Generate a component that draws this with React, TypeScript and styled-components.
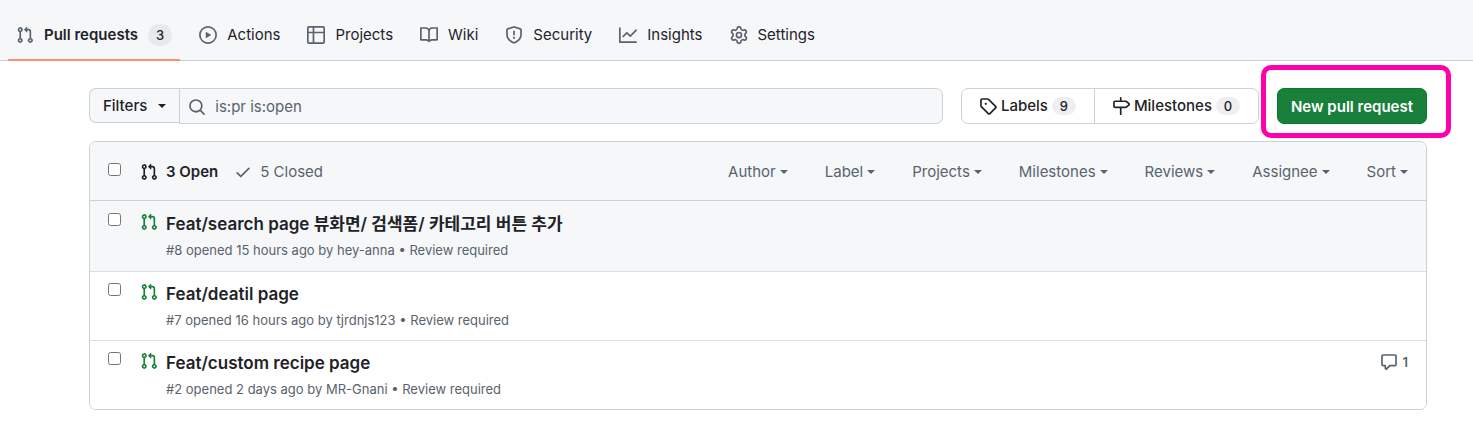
import React from "react";
import styled, { createGlobalStyle } from "styled-components";

const color = {
  text: "#1f2328",
  muted: "#59636e",
  border: "#c9d1d9",
  rowBorder: "#d8dee4",
  subtle: "#f5f7f9",
  green: "#18803a",
  accent: "#fd8c73",
  highlight: "#ff00aa",
};

const GlobalStyle = createGlobalStyle`
  *, *::before, *::after { box-sizing: border-box; }
  body {
    margin: 0;
    background: #ffffff;
    color: ${color.text};
    font-family: Inter, "Noto Sans CJK KR", "Liberation Sans", sans-serif;
    font-size: 15px;
    line-height: 24px;
  }
  button, input { font: inherit; color: inherit; }
  a { color: inherit; text-decoration: none; }
`;

const paths = {
  pull: "M1.5 3.25a2.25 2.25 0 1 1 3 2.122v5.256a2.251 2.251 0 1 1-1.5 0V5.372A2.25 2.25 0 0 1 1.5 3.25Zm5.677-.177L9.573.677A.25.25 0 0 1 10 .854V2.5h1A2.5 2.5 0 0 1 13.5 5v5.628a2.251 2.251 0 1 1-1.5 0V5a1 1 0 0 0-1-1h-1v1.646a.25.25 0 0 1-.427.177L7.177 3.427a.25.25 0 0 1 0-.354ZM3.75 2.5a.75.75 0 1 0 0 1.5.75.75 0 0 0 0-1.5Zm0 9.5a.75.75 0 1 0 0 1.5.75.75 0 0 0 0-1.5Zm8.25.75a.75.75 0 1 0 1.5 0 .75.75 0 0 0-1.5 0Z",
  play: "M8 0a8 8 0 1 1 0 16A8 8 0 0 1 8 0ZM1.5 8a6.5 6.5 0 1 0 13 0 6.5 6.5 0 0 0-13 0Zm4.879-2.773 4.264 2.559a.25.25 0 0 1 0 .428l-4.264 2.559A.25.25 0 0 1 6 10.559V5.442a.25.25 0 0 1 .379-.215Z",
  table: "M0 1.75C0 .784.784 0 1.75 0h12.5C15.216 0 16 .784 16 1.75v12.5A1.75 1.75 0 0 1 14.25 16H1.75A1.75 1.75 0 0 1 0 14.25ZM6.5 6.5v8h7.75a.25.25 0 0 0 .25-.25V6.5Zm8-1.5V1.75a.25.25 0 0 0-.25-.25H6.5V5Zm-13 1.5v7.75c0 .138.112.25.25.25H5v-8ZM5 5V1.5H1.75a.25.25 0 0 0-.25.25V5Z",
  book: "M0 1.75A.75.75 0 0 1 .75 1h4.253c1.227 0 2.317.59 3 1.501A3.743 3.743 0 0 1 11.006 1h4.245a.75.75 0 0 1 .75.75v10.5a.75.75 0 0 1-.75.75h-4.507a2.25 2.25 0 0 0-1.591.659l-.622.621a.75.75 0 0 1-1.06 0l-.622-.621A2.25 2.25 0 0 0 5.258 13H.75a.75.75 0 0 1-.75-.75Zm7.251 10.324.004-5.073-.002-2.253A2.25 2.25 0 0 0 5.003 2.5H1.5v9h3.757a3.75 3.75 0 0 1 1.994.574ZM8.755 4.75l-.004 7.322a3.752 3.752 0 0 1 1.992-.572H14.5v-9h-3.495a2.25 2.25 0 0 0-2.25 2.25Z",
  shield: "M7.467.133a1.748 1.748 0 0 1 1.066 0l5.25 1.68A1.75 1.75 0 0 1 15 3.48V7c0 1.566-.32 3.182-1.303 4.682-.983 1.498-2.585 2.813-5.032 3.855a1.697 1.697 0 0 1-1.33 0c-2.447-1.042-4.049-2.357-5.032-3.855C1.32 10.182 1 8.566 1 7V3.48a1.75 1.75 0 0 1 1.217-1.667Zm.61 1.429a.25.25 0 0 0-.153 0l-5.25 1.68a.25.25 0 0 0-.174.238V7c0 1.358.275 2.666 1.057 3.86.784 1.194 2.121 2.34 4.366 3.297a.196.196 0 0 0 .154 0c2.245-.956 3.582-2.104 4.366-3.298C13.225 9.666 13.5 8.36 13.5 7V3.48a.251.251 0 0 0-.174-.237l-5.25-1.68ZM8.75 4.75v3a.75.75 0 0 1-1.5 0v-3a.75.75 0 0 1 1.5 0ZM9 10.5a1 1 0 1 1-2 0 1 1 0 0 1 2 0Z",
  graph: "M1.5 1.75V13.5h13.75a.75.75 0 0 1 0 1.5H.75a.75.75 0 0 1-.75-.75V1.75a.75.75 0 0 1 1.5 0Zm14.28 2.53-5.25 5.25a.75.75 0 0 1-1.06 0L7 7.06 4.28 9.78a.751.751 0 0 1-1.042-.018.751.751 0 0 1-.018-1.042l3.25-3.25a.75.75 0 0 1 1.06 0L10 7.94l4.72-4.72a.751.751 0 0 1 1.042.018.751.751 0 0 1 .018 1.042Z",
  gear: "M8 0a8.2 8.2 0 0 1 .701.031C9.444.095 9.99.645 10.16 1.29l.288 1.107c.018.066.079.158.212.224.231.114.454.243.668.386.123.082.233.09.299.071l1.103-.303c.644-.176 1.392.021 1.82.63.27.385.506.792.704 1.218.315.675.111 1.422-.364 1.891l-.814.806c-.049.048-.098.147-.088.294.016.257.016.515 0 .772-.01.147.038.246.088.294l.814.806c.475.469.679 1.216.364 1.891a7.977 7.977 0 0 1-.704 1.217c-.428.61-1.176.807-1.82.63l-1.102-.302c-.067-.019-.177-.011-.3.071a5.909 5.909 0 0 1-.668.386c-.133.066-.194.158-.211.224l-.29 1.106c-.168.646-.715 1.196-1.458 1.26a8.006 8.006 0 0 1-1.402 0c-.743-.064-1.289-.614-1.458-1.26l-.289-1.106c-.018-.066-.079-.158-.212-.224a5.738 5.738 0 0 1-.668-.386c-.123-.082-.233-.09-.299-.071l-1.103.303c-.644.176-1.392-.021-1.82-.63a8.12 8.12 0 0 1-.704-1.218c-.315-.675-.111-1.422.363-1.891l.815-.806c.05-.048.098-.147.088-.294a6.214 6.214 0 0 1 0-.772c.01-.147-.038-.246-.088-.294l-.815-.806C.635 6.045.431 5.298.746 4.623a7.92 7.92 0 0 1 .704-1.217c.428-.61 1.176-.807 1.82-.63l1.102.302c.067.019.177.011.3-.071.214-.143.437-.272.668-.386.133-.066.194-.158.211-.224l.29-1.106C6.009.645 6.556.095 7.299.03 7.53.01 7.764 0 8 0Zm-.571 1.525c-.036.003-.108.036-.137.146l-.289 1.105c-.147.561-.549.967-.998 1.189-.173.086-.34.183-.5.29-.417.278-.97.423-1.529.27l-1.103-.303c-.109-.03-.175.016-.195.045-.22.312-.412.644-.573.99-.014.031-.021.11.059.19l.815.806c.411.406.562.957.53 1.456a4.709 4.709 0 0 0 0 .582c.032.499-.119 1.05-.53 1.456l-.815.806c-.081.08-.073.159-.059.19.162.346.353.677.573.989.02.03.085.076.195.046l1.102-.303c.56-.153 1.113-.008 1.53.27.161.107.328.204.501.29.447.222.85.629.997 1.189l.289 1.105c.029.109.101.143.137.146a6.6 6.6 0 0 0 1.142 0c.036-.003.108-.036.137-.146l.289-1.105c.147-.561.549-.967.998-1.189.173-.086.34-.183.5-.29.417-.278.97-.423 1.529-.27l1.103.303c.109.029.175-.016.195-.045.22-.313.411-.644.573-.99.014-.031.021-.11-.059-.19l-.815-.806c-.411-.406-.562-.957-.53-1.456a4.709 4.709 0 0 0 0-.582c-.032-.499.119-1.05.53-1.456l.815-.806c.081-.08.073-.159.059-.19a6.464 6.464 0 0 0-.573-.989c-.02-.03-.085-.076-.195-.046l-1.102.303c-.56.153-1.113.008-1.53-.27a4.44 4.44 0 0 0-.501-.29c-.447-.222-.85-.629-.997-1.189l-.289-1.105c-.029-.11-.101-.143-.137-.146a6.6 6.6 0 0 0-1.142 0ZM11 8a3 3 0 1 1-6 0 3 3 0 0 1 6 0ZM9.5 8a1.5 1.5 0 1 0-3.001.001A1.5 1.5 0 0 0 9.5 8Z",
  search: "M10.68 11.74a6 6 0 0 1-7.922-8.982 6 6 0 0 1 8.982 7.922l3.04 3.04a.749.749 0 0 1-.326 1.275.749.749 0 0 1-.734-.215ZM11.5 7a4.499 4.499 0 1 0-8.997 0A4.499 4.499 0 0 0 11.5 7Z",
  tag: "M1 7.775V2.75C1 1.784 1.784 1 2.75 1h5.025c.464 0 .91.184 1.238.513l6.25 6.25a1.75 1.75 0 0 1 0 2.474l-5.026 5.026a1.75 1.75 0 0 1-2.474 0l-6.25-6.25A1.752 1.752 0 0 1 1 7.775Zm1.5 0c0 .066.026.13.073.177l6.25 6.25a.25.25 0 0 0 .354 0l5.025-5.025a.25.25 0 0 0 0-.354l-6.25-6.25a.25.25 0 0 0-.177-.073H2.75a.25.25 0 0 0-.25.25ZM6 5a1 1 0 1 1 0 2 1 1 0 0 1 0-2Z",
  milestone: "M7.75 0a.75.75 0 0 1 .75.75V3h3.634c.414 0 .814.147 1.13.414l2.07 1.75a1.75 1.75 0 0 1 0 2.672l-2.07 1.75a1.75 1.75 0 0 1-1.13.414H8.5v5.25a.75.75 0 0 1-1.5 0V10H2.75A1.75 1.75 0 0 1 1 8.25v-3.5C1 3.784 1.784 3 2.75 3H7V.75A.75.75 0 0 1 7.75 0Zm4.384 8.5a.25.25 0 0 0 .161-.06l2.07-1.75a.248.248 0 0 0 0-.38l-2.07-1.75a.25.25 0 0 0-.161-.06H2.75a.25.25 0 0 0-.25.25v3.5c0 .138.112.25.25.25h9.384Z",
  check: "M13.78 4.22a.75.75 0 0 1 0 1.06l-7.25 7.25a.75.75 0 0 1-1.06 0L2.22 9.28a.751.751 0 0 1 .018-1.042.751.751 0 0 1 1.042-.018L6 10.94l6.72-6.72a.75.75 0 0 1 1.06 0Z",
  comment: "M1 2.75C1 1.784 1.784 1 2.75 1h10.5c.966 0 1.75.784 1.75 1.75v7.5A1.75 1.75 0 0 1 13.25 12H9.06l-2.573 2.573A1.458 1.458 0 0 1 4 13.543V12H2.75A1.75 1.75 0 0 1 1 10.25Zm1.5 0v7.5c0 .138.112.25.25.25h2a.75.75 0 0 1 .75.75v2.19l2.72-2.72a.749.749 0 0 1 .53-.22h4.5a.25.25 0 0 0 .25-.25v-7.5a.25.25 0 0 0-.25-.25H2.75a.25.25 0 0 0-.25.25Z",
};

type IconName = keyof typeof paths;

const Svg = styled.svg`
  display: block;
  flex: none;
  fill: currentColor;
`;

const Icon = ({ name }: { name: IconName }) => (
  <Svg width="18" height="18" viewBox="0 0 16 16" aria-hidden="true">
    <path d={paths[name]} />
  </Svg>
);

const Caret = styled.span`
  border: 4px solid transparent;
  border-top-color: currentColor;
  border-bottom-width: 0;
`;

const Nav = styled.nav`
  display: flex;
  gap: 11px;
  padding: 8px 8px 0;
  background: ${color.subtle};
  border-bottom: 1px solid ${color.border};
`;

const Tab = styled.a<{ $active?: boolean }>`
  display: flex;
  align-items: center;
  gap: 10px;
  height: 53px;
  padding: 2px 8px 0;
  margin-bottom: -1px;
  border-bottom: 2px solid ${(p) => (p.$active ? color.accent : "transparent")};
  font-weight: ${(p) => (p.$active ? 600 : 400)};
  white-space: nowrap;

  svg { color: ${color.muted}; }
`;

const Counter = styled.span<{ $compact?: boolean }>`
  min-width: 24px;
  padding: 0 ${(p) => (p.$compact ? 7 : 8)}px;
  border-radius: 12px;
  background: ${(p) => (p.$compact ? "#eeeff1" : "#e6eaed")};
  font-size: 13px;
  font-weight: 500;
  line-height: ${(p) => (p.$compact ? 18 : 22)}px;
  text-align: center;
`;

const Main = styled.main`
  padding: 27px 46px 22px 89px;
`;

const Toolbar = styled.div`
  display: flex;
  gap: 18px;
  margin-bottom: 17px;
`;

const SearchForm = styled.form`
  display: flex;
  flex: 1;
  min-width: 0;
`;

const FilterButton = styled.button`
  display: flex;
  align-items: center;
  gap: 11px;
  height: 35px;
  padding: 0 13px;
  border: 1px solid ${color.border};
  border-right: 0;
  border-radius: 7px 0 0 7px;
  background: ${color.subtle};
  font-weight: 500;
`;

const SearchField = styled.label`
  display: flex;
  flex: 1;
  align-items: center;
  gap: 9px;
  height: 36px;
  padding: 2px 9px 0 8px;
  border: 1px solid ${color.border};
  border-radius: 0 7px 7px 0;
  background: ${color.subtle};
  color: ${color.muted};
`;

const SearchInput = styled.input`
  flex: 1;
  min-width: 0;
  padding: 0;
  border: 0;
  outline: 0;
  background: transparent;
`;

const LinkGroup = styled.div`
  display: flex;
  height: 36px;
  border: 1px solid ${color.border};
  border-radius: 7px;
`;

const GroupLink = styled.a`
  display: flex;
  align-items: center;
  gap: 4px;
  padding: 0 18px 0 17px;
  font-weight: 500;
  white-space: nowrap;

  & + & { border-left: 1px solid ${color.border}; }
`;

const CreateWrap = styled.div`
  position: relative;
`;

const CreateButton = styled.button`
  height: 36px;
  padding: 2px 13px 0;
  border: 1px solid #167135;
  border-radius: 7px;
  background: ${color.green};
  color: #ffffff;
  font-weight: 600;
  white-space: nowrap;
`;

const Highlight = styled.span`
  position: absolute;
  inset: -23px -24px -14px -16px;
  border: 5px solid ${color.highlight};
  border-radius: 10px;
  pointer-events: none;
`;

const List = styled.section`
  border: 1px solid ${color.border};
  border-radius: 7px;
  overflow: hidden;
`;

const ListHeader = styled.header`
  display: flex;
  align-items: center;
  height: 59px;
  padding: 2px 18px 0;
  border-bottom: 1px solid ${color.border};
  background: ${color.subtle};
  color: ${color.muted};
`;

const Check = styled.input`
  flex: none;
  width: 13px;
  height: 13px;
  margin: 1px 19px 7px 0;
`;

const States = styled.div`
  display: flex;
  flex: 1;
  gap: 16px;
`;

const StateLink = styled.a<{ $active?: boolean }>`
  display: flex;
  align-items: center;
  gap: 8px;
  color: ${(p) => (p.$active ? color.text : color.muted)};
  font-weight: ${(p) => (p.$active ? 600 : 400)};
`;

const Menus = styled.div`
  display: flex;
  gap: 37px;
`;

const MenuButton = styled.button`
  display: flex;
  align-items: center;
  gap: 4px;
  padding: 0;
  border: 0;
  background: none;
`;

const Rows = styled.ul`
  margin: 0;
  padding: 0;
  list-style: none;
`;

const Row = styled.li<{ $hover?: boolean }>`
  display: flex;
  align-items: flex-start;
  padding: 10px 18px;
  background: ${(p) => (p.$hover ? color.subtle : "#ffffff")};

  &:first-child { padding-block: 11px; }
  & + & { border-top: 1px solid ${color.rowBorder}; }
`;

const RowStatus = styled.span`
  margin: 1px 8px 0 0;
  color: ${color.green};
`;

const RowBody = styled.div`
  flex: 1;
  min-width: 0;
`;

const Title = styled.a`
  display: block;
  font-size: 17px;
  font-weight: 600;
`;

const Meta = styled.div`
  margin-top: 5px;
  color: ${color.muted};
  font-size: 13px;
  line-height: 19px;
`;

const Comments = styled.a`
  display: flex;
  align-items: center;
  gap: 5px;
  padding-top: 1px;
  color: ${color.muted};
  font-size: 13px;
  font-weight: 600;
  line-height: 20px;
`;

const tabs: { icon: IconName; label: string; count?: number }[] = [
  { icon: "pull", label: "Pull requests", count: 3 },
  { icon: "play", label: "Actions" },
  { icon: "table", label: "Projects" },
  { icon: "book", label: "Wiki" },
  { icon: "shield", label: "Security" },
  { icon: "graph", label: "Insights" },
  { icon: "gear", label: "Settings" },
];

const menus = ["Author", "Label", "Projects", "Milestones", "Reviews", "Assignee", "Sort"];

const pulls = [
  { id: 8, title: "Feat/search page 뷰화면/ 검색폼/ 카테고리 버튼 추가", age: "15 hours", author: "hey-anna", comments: 0 },
  { id: 7, title: "Feat/deatil page", age: "16 hours", author: "tjrdnjs123", comments: 0 },
  { id: 2, title: "Feat/custom recipe page", age: "2 days", author: "MR-Gnani", comments: 1 },
];

export default function App() {
  return (
    <>
      <GlobalStyle />
      <Nav aria-label="Repository">
        {tabs.map((t) => (
          <Tab key={t.label} href="#" $active={t.count !== undefined}>
            <Icon name={t.icon} />
            {t.label}
            {t.count !== undefined && <Counter>{t.count}</Counter>}
          </Tab>
        ))}
      </Nav>
      <Main>
        <Toolbar>
          <SearchForm role="search">
            <FilterButton type="button" aria-haspopup="menu">
              Filters <Caret />
            </FilterButton>
            <SearchField>
              <Icon name="search" />
              <SearchInput type="text" aria-label="Search pull requests" defaultValue="is:pr is:open" />
            </SearchField>
          </SearchForm>
          <LinkGroup>
            <GroupLink href="#">
              <Icon name="tag" />
              Labels <Counter $compact>9</Counter>
            </GroupLink>
            <GroupLink href="#">
              <Icon name="milestone" />
              Milestones <Counter $compact>0</Counter>
            </GroupLink>
          </LinkGroup>
          <CreateWrap>
            <CreateButton type="button">New pull request</CreateButton>
            <Highlight />
          </CreateWrap>
        </Toolbar>
        <List aria-label="Pull requests">
          <ListHeader>
            <Check type="checkbox" aria-label="Select all pull requests" />
            <States>
              <StateLink href="#" $active>
                <Icon name="pull" />3 Open
              </StateLink>
              <StateLink href="#">
                <Icon name="check" />5 Closed
              </StateLink>
            </States>
            <Menus>
              {menus.map((m) => (
                <MenuButton key={m} type="button" aria-haspopup="menu">
                  {m} <Caret />
                </MenuButton>
              ))}
            </Menus>
          </ListHeader>
          <Rows>
            {pulls.map((p, i) => (
              <Row key={p.id} $hover={i === 0}>
                <Check type="checkbox" aria-label={`Select ${p.title}`} />
                <RowStatus>
                  <Icon name="pull" />
                </RowStatus>
                <RowBody>
                  <Title href="#">{p.title}</Title>
                  <Meta>
                    #{p.id} opened {p.age} ago by <a href="#">{p.author}</a> • <a href="#">Review required</a>
                  </Meta>
                </RowBody>
                {p.comments > 0 && (
                  <Comments href="#" aria-label={`${p.comments} comment`}>
                    <Icon name="comment" />
                    {p.comments}
                  </Comments>
                )}
              </Row>
            ))}
          </Rows>
        </List>
      </Main>
    </>
  );
}
